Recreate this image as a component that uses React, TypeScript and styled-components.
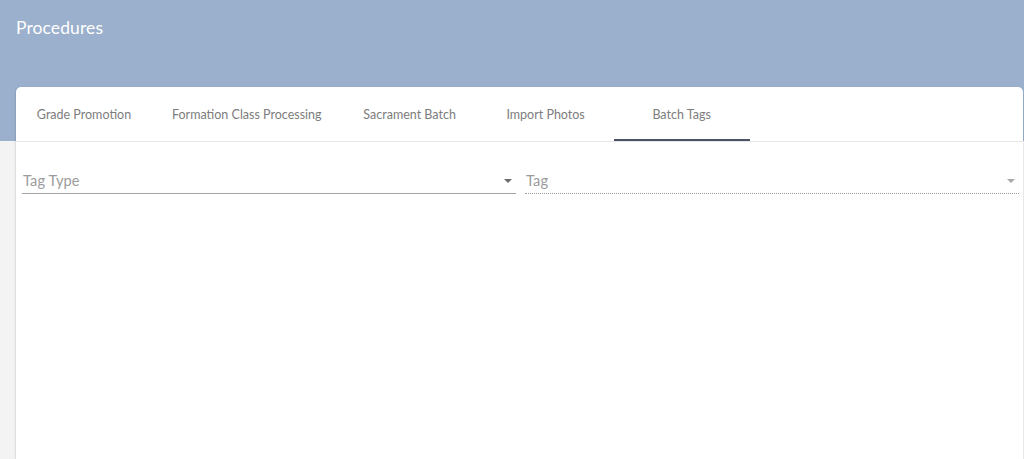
import React from "react";
import styled, { createGlobalStyle } from "styled-components";

const Global = createGlobalStyle`
  html, body { margin: 0; padding: 0; }
  body { font-family: Lato, "Open Sans", Arial, sans-serif; background: #f3f3f3; }
  * { box-sizing: border-box; }
`;

const Page = styled.div`
  min-height: 459px;
  background: linear-gradient(to bottom, #9ab0cc 0, #9ab0cc 141px, #f3f3f3 141px);
  display: flex;
  flex-direction: column;
`;

const Header = styled.header`
  height: 87px;
  padding: 16px 16px 0;
`;

const Title = styled.h1`
  margin: 0;
  font-size: 17.5px;
  font-weight: 400;
  color: #ffffff;
  line-height: 23px;
  letter-spacing: 0.1px;
`;

const Card = styled.main`
  flex: 1;
  margin: 0 1px 0 16px;
  background: #ffffff;
  border-radius: 5px 5px 0 0;
  box-shadow: 0 1px 3px rgba(0, 0, 0, 0.12), -1px 0 1px rgba(0, 0, 0, 0.04);
  min-height: 372px;
`;

const TabBar = styled.nav`
  display: flex;
  height: 55px;
  border-bottom: 1px solid #e6e6e6;
`;

const Tab = styled.button<{ $active?: boolean }>`
  position: relative;
  min-width: 136px;
  padding: 0 20px;
  height: 54px;
  border: none;
  background: transparent;
  font-family: inherit;
  font-size: 12.5px;
  color: #7d7d7d;
  cursor: pointer;
  white-space: nowrap;
  &::after {
    content: "";
    position: absolute;
    left: 0;
    right: 0;
    bottom: 0;
    height: 2px;
    background: ${(p) => (p.$active ? "#4b5366" : "transparent")};
  }
`;

const Fields = styled.div`
  display: grid;
  grid-template-columns: 1fr 1fr;
  column-gap: 9px;
  padding: 24px 4px 0 6px;
`;

const Field = styled.div<{ $disabled?: boolean }>`
  display: flex;
  align-items: center;
  justify-content: space-between;
  height: 28px;
  padding: 2px 1px 0 1px;
  border-bottom: 1px ${(p) => (p.$disabled ? "dotted #9a9a9a" : "solid #a5a5a5")};
`;

const Label = styled.span`
  font-size: 14.6px;
  color: #9b9b9b;
  letter-spacing: 0.1px;
`;

const Arrow = styled.span<{ $disabled?: boolean }>`
  width: 0;
  height: 0;
  margin-right: 3px;
  border-left: 4.5px solid transparent;
  border-right: 4.5px solid transparent;
  border-top: 4.5px solid ${(p) => (p.$disabled ? "#a8a8a8" : "#6b6b6b")};
`;

const tabs = [
  "Grade Promotion",
  "Formation Class Processing",
  "Sacrament Batch",
  "Import Photos",
  "Batch Tags",
];

export default function App() {
  return (
    <>
      <Global />
      <Page>
        <Header>
          <Title>Procedures</Title>
        </Header>
        <Card>
          <TabBar>
            {tabs.map((t) => (
              <Tab key={t} $active={t === "Batch Tags"}>
                {t}
              </Tab>
            ))}
          </TabBar>
          <Fields>
            <Field>
              <Label>Tag Type</Label>
              <Arrow />
            </Field>
            <Field $disabled>
              <Label>Tag</Label>
              <Arrow $disabled />
            </Field>
          </Fields>
        </Card>
      </Page>
    </>
  );
}
